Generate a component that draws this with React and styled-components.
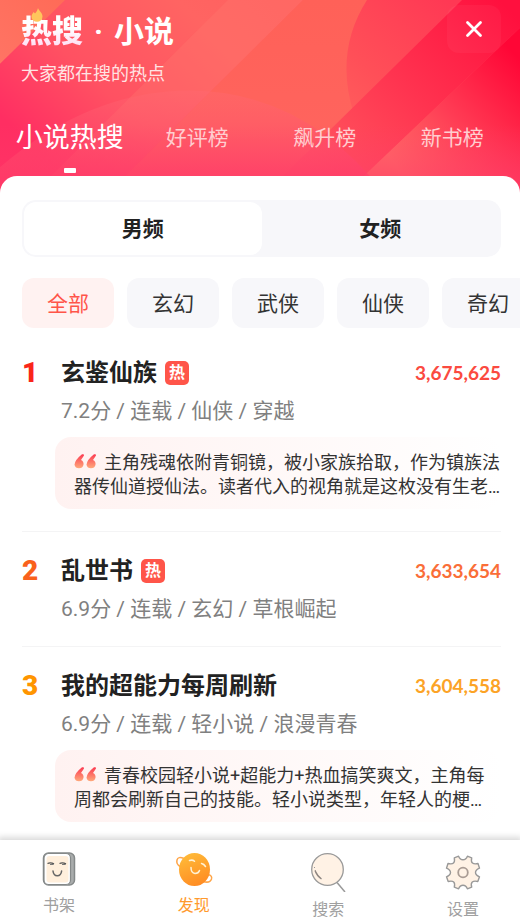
import React, { useState } from "react";
import styled, { createGlobalStyle } from "styled-components";

const GlobalStyle = createGlobalStyle`
  :root {
    --root-font: Roboto, "Noto Sans CJK SC", sans-serif;
    --number-font: Lato, "Noto Sans CJK SC", sans-serif;
  }
  * {
    box-sizing: border-box;
  }
  body {
    margin: 0;
    background: #ffffff;
    font-family: var(--root-font);
    color: #222222;
  }
  button {
    border: none;
    margin: 0;
    padding: 0;
    background: transparent;
    font-family: inherit;
    color: inherit;
    cursor: pointer;
  }
`;

const Page = styled.div`
  min-height: 100vh;
  display: flex;
  flex-direction: column;
`;

const Header = styled.header`
  position: relative;
  overflow: hidden;
  padding-bottom: 18px;
  background: #ff4d60;
  color: #ffffff;
`;

const Backdrop = styled.svg`
  position: absolute;
  inset: 0;
  width: 100%;
  height: 100%;
`;

const HeaderTop = styled.div`
  position: relative;
  display: flex;
  justify-content: space-between;
  align-items: flex-start;
  padding: 5px 19px 0 21px;
`;

const Title = styled.h1`
  display: flex;
  align-items: center;
  margin: 5px 0 0;
  font: 700 30px/44px var(--root-font);
`;

const TitleLogo = styled.span`
  position: relative;
  font-size: 31px;
  font-weight: 900;
  background: linear-gradient(#ffffff 40%, #ffdcf4 85%);
  background-clip: text;
  color: transparent;
`;

const Flame = styled.svg`
  position: absolute;
  left: 10px;
  top: -2px;
  width: 12px;
  height: 14px;
`;

const TitleDot = styled.span`
  width: 31px;
  text-align: center;
`;

const SubTitle = styled.p`
  margin: 8px 0 0;
  font: 400 18px/24px var(--root-font);
  color: #ffe3e3;
`;

const CloseButton = styled.button`
  display: flex;
  align-items: center;
  justify-content: center;
  width: 54px;
  height: 48px;
  border-radius: 12px;
  background: rgba(255, 255, 255, 0.04);
`;

const Tabs = styled.nav`
  position: relative;
  display: grid;
  grid-template-columns: repeat(4, 1fr);
  margin-top: 32px;
  padding: 0 4px 0 6px;
`;

const Tab = styled.button`
  display: flex;
  flex-direction: column;
  align-items: center;
  height: 57px;
  font-size: ${(props) => (props.$active ? "27px" : "21px")};
  line-height: 40px;
  white-space: nowrap;
  color: ${(props) => (props.$active ? "#ffffff" : "#ffcdd0")};

  &::after {
    content: "";
    width: 12px;
    height: 5px;
    margin-top: 10px;
    border-radius: 1px;
    background: ${(props) => (props.$active ? "#ffffff" : "transparent")};
  }
`;

const Sheet = styled.main`
  position: relative;
  flex: 1;
  margin-top: -17px;
  padding: 24px 0 18px;
  border-radius: 17px 17px 0 0;
  background: #ffffff;
`;

const Switch = styled.div`
  display: grid;
  grid-template-columns: 1fr 1fr;
  margin: 0 19px 0 22px;
  padding: 2px;
  border-radius: 14px;
  background: #f7f7fa;
`;

const SwitchItem = styled.button`
  height: 53px;
  padding-bottom: 4px;
  border-radius: 12px;
  background: ${(props) => (props.$active ? "#ffffff" : "transparent")};
  font-size: 21px;
  font-weight: 700;
`;

const Chips = styled.div`
  display: flex;
  gap: 13px;
  margin-top: 21px;
  padding-left: 22px;
  overflow: hidden;
`;

const Chip = styled.button`
  flex: none;
  height: 50px;
  padding: 0 25px 3px;
  border-radius: 12px;
  background: ${(props) => (props.$active ? "#fff2f1" : "#f7f7fa")};
  font-size: 21px;
  color: ${(props) => (props.$active ? "#ff5549" : "#333333")};
`;

const List = styled.ol`
  list-style: none;
  margin: 6px 19px 0 22px;
  padding: 0;
`;

const Item = styled.li`
  display: flex;
  padding: 24px 0 22px;

  & + & {
    border-top: 1px solid #f4f4f5;
  }
  &:last-child {
    padding-bottom: 0;
  }
`;

const Rank = styled.span`
  flex: none;
  width: 39px;
  font: 900 28px/30px var(--root-font);
  color: ${(props) => props.$color};
`;

const ItemBody = styled.div`
  flex: 1;
  min-width: 0;
`;

const ItemHead = styled.div`
  display: flex;
  align-items: center;
  height: 30px;
`;

const BookName = styled.h2`
  margin: 0;
  font: 700 24px/30px var(--root-font);
`;

const HotBadge = styled.span`
  width: 24px;
  height: 24px;
  margin-left: 8px;
  border-radius: 5px;
  background: #ff5549;
  font: 700 16px/23px var(--root-font);
  text-align: center;
  color: #ffffff;
`;

const Heat = styled.span`
  margin-left: auto;
  font: 700 19px/30px var(--number-font);
  color: ${(props) => props.$color};
`;

const Meta = styled.div`
  margin-top: 8px;
  font: 400 21px/30px var(--root-font);
  color: #808080;
`;

const Quote = styled.p`
  margin: 11px 0 0 -6px;
  padding: 14px 0 10px 19px;
  border-radius: 16px;
  background: linear-gradient(90deg, #fff2f1, #ffffff);
  font: 400 18px/24px var(--root-font);
  color: #333333;
`;

const QuoteMark = styled.svg`
  width: 23px;
  height: 16px;
  margin-right: 7px;
  vertical-align: -1px;
`;

const BottomBar = styled.nav`
  position: sticky;
  bottom: 0;
  display: flex;
  justify-content: space-between;
  height: 80px;
  padding: 12px 33px 0 35px;
  background: #ffffff;
  box-shadow: 0 -1px 6px 2px rgba(0, 0, 0, 0.15);
`;

const BarLink = styled.a`
  display: flex;
  flex-direction: column;
  align-items: center;
  width: 48px;
  font-size: 16px;
  line-height: 20px;
  text-decoration: none;
  color: ${(props) => (props.$active ? "#ff9a2e" : "#a0a0a0")};

  svg {
    flex: none;
    width: 40px;
    height: 40px;
    margin-bottom: ${(props) => (props.$low ? "8px" : "4px")};
  }
`;

const tabs = ["小说热搜", "好评榜", "飙升榜", "新书榜"];
const channels = ["男频", "女频"];
const genres = ["全部", "玄幻", "武侠", "仙侠", "奇幻"];

const books = [
  {
    name: "玄鉴仙族",
    hot: true,
    heat: "3,675,625",
    meta: "7.2分 / 连载 / 仙侠 / 穿越",
    quote:
      "主角残魂依附青铜镜，被小家族拾取，作为镇族法器传仙道授仙法。读者代入的视角就是这枚没有生老…",
    rankColor: "#fa2519",
    heatColor: "#fb4a40",
  },
  {
    name: "乱世书",
    hot: true,
    heat: "3,633,654",
    meta: "6.9分 / 连载 / 玄幻 / 草根崛起",
    rankColor: "#f9611c",
    heatColor: "#fa6e38",
  },
  {
    name: "我的超能力每周刷新",
    heat: "3,604,558",
    meta: "6.9分 / 连载 / 轻小说 / 浪漫青春",
    quote:
      "青春校园轻小说+超能力+热血搞笑爽文，主角每周都会刷新自己的技能。轻小说类型，年轻人的梗…",
    rankColor: "#ff9500",
    heatColor: "#fca326",
  },
];

function HeaderBackdrop() {
  return (
    <Backdrop viewBox="0 0 520 194" preserveAspectRatio="none" aria-hidden="true">
      <defs>
        <linearGradient id="base" x1="0" y1="0.6" x2="1" y2="0.2">
          <stop offset="0" stopColor="#ff2e62" />
          <stop offset="0.22" stopColor="#ff5162" />
          <stop offset="0.5" stopColor="#ff6462" />
          <stop offset="1" stopColor="#ff5a58" />
        </linearGradient>
        <linearGradient id="corner" x1="0" y1="1" x2="1" y2="0">
          <stop offset="0" stopColor="#ff7464" />
          <stop offset="1" stopColor="#ff6b57" />
        </linearGradient>
        <linearGradient id="middle" x1="0" y1="0" x2="0" y2="1">
          <stop offset="0" stopColor="#ff6158" />
          <stop offset="1" stopColor="#ff6560" />
        </linearGradient>
        <linearGradient id="disc" gradientUnits="userSpaceOnUse" x1="330" y1="130" x2="450" y2="0">
          <stop offset="0" stopColor="#ff625e" />
          <stop offset="0.4" stopColor="#ff4f58" />
          <stop offset="1" stopColor="#ff3854" />
        </linearGradient>
        <linearGradient id="band" gradientUnits="userSpaceOnUse" x1="310" y1="180" x2="500" y2="0">
          <stop offset="0" stopColor="#ff5c60" />
          <stop offset="0.5" stopColor="#ff3450" />
          <stop offset="1" stopColor="#ff103e" />
        </linearGradient>
        <linearGradient id="edge" gradientUnits="userSpaceOnUse" x1="400" y1="170" x2="520" y2="60">
          <stop offset="0" stopColor="#ff6e66" />
          <stop offset="0.45" stopColor="#ff3d55" />
          <stop offset="1" stopColor="#ff0636" />
        </linearGradient>
        <linearGradient id="arc" x1="0" y1="0" x2="0" y2="1">
          <stop offset="0" stopColor="#ff6a74" stopOpacity="0.35" />
          <stop offset="0.5" stopColor="#ff4c6c" stopOpacity="0.5" />
          <stop offset="1" stopColor="#ff3768" stopOpacity="0.8" />
        </linearGradient>
        <linearGradient id="fade" x1="0" y1="0" x2="0" y2="1">
          <stop offset="0" stopColor="#ff3768" stopOpacity="0" />
          <stop offset="1" stopColor="#ff3768" stopOpacity="0.7" />
        </linearGradient>
      </defs>
      <rect width="520" height="194" fill="url(#base)" />
      <path d="M0 0H65L0 64Z" fill="url(#corner)" />
      <path d="M228 0H303L108 194H34Z" fill="#ff7a70" fillOpacity="0.3" />
      <path d="M303 0H400V194H108Z" fill="url(#middle)" />
      <path d="M367 0Q334 52 354 115L330 194H520V0Z" fill="url(#disc)" />
      <path d="M462 0H520V28L346 194H266Z" fill="url(#band)" />
      <path d="M520 28L346 194H520Z" fill="url(#edge)" />
      <rect y="125" width="520" height="69" fill="url(#fade)" />
      <path d="M0 168Q90 91 190 91Q305 92 384 194H0Z" fill="url(#arc)" />
    </Backdrop>
  );
}

function QuoteIcon() {
  return (
    <QuoteMark viewBox="0 0 23 16" aria-hidden="true">
      <defs>
        <linearGradient id="quote" x1="0" y1="0" x2="0" y2="1">
          <stop offset="0" stopColor="#fb3a51" />
          <stop offset="1" stopColor="#ffaa7c" />
        </linearGradient>
      </defs>
      <path
        fill="url(#quote)"
        d="M8 0.300Q10.500 0 10 1.500L7 6Q10 7.500 9.500 10.800A4.600 4.500 0 0 1 0.500 10.800Q0.800 6 8 0.300ZM20 0.300Q22.500 0 22 1.500L19 6Q22 7.500 21.500 10.800A4.600 4.500 0 0 1 12.500 10.800Q12.800 6 20 0.300Z"
      />
    </QuoteMark>
  );
}

function ShelfIcon() {
  return (
    <svg viewBox="0 0 40 40" fill="none" aria-hidden="true">
      <rect x="4.500" y="1" width="31" height="32" rx="5" fill="#a9acac" stroke="#858989" strokeWidth="1.500" />
      <rect x="5" y="1.500" width="26.500" height="31" rx="4.500" fill="#fff" stroke="#858989" strokeWidth="1.200" />
      <rect x="7.500" y="4" width="22" height="26.500" rx="3" fill="#ffefdc" />
      <path d="M8.500 11.500q3-1.500 6.500.3M20.500 11.500q3-1.500 6.500.3" stroke="#555" strokeWidth="1.300" />
      <path d="M11 12.500h3.500M23 12.500h3.500" stroke="#777" strokeWidth="1.200" />
      <path d="M14 19q.5 4.800 4.300 4.800t4.300-4.800" stroke="#666" strokeWidth="1.500" strokeLinecap="round" />
    </svg>
  );
}

function PlanetIcon() {
  return (
    <svg viewBox="0 0 40 40" fill="none" aria-hidden="true">
      <defs>
        <linearGradient id="planet" x1="0.3" y1="0" x2="0.7" y2="1">
          <stop offset="0" stopColor="#ffba38" />
          <stop offset="1" stopColor="#ff8a22" />
        </linearGradient>
      </defs>
      <path d="M10 6.500Q4 4 3 8Q2 12 6 14.500M34 22.500Q38.500 23.500 37.500 27Q36 31.500 29 29.500" stroke="#ffa548" strokeWidth="1.500" />
      <ellipse cx="20.500" cy="17.500" rx="15.500" ry="16.500" fill="url(#planet)" />
      <path d="M15.500 8.500q3-1 5 .7M27.500 11.500q2.500.5 4 3" stroke="#fff2d5" strokeWidth="1.500" strokeLinecap="round" />
      <path d="M17 15.500q0 5.500 4 6q3.500 0 4.500-3" stroke="#fff2d5" strokeWidth="1.500" strokeLinecap="round" />
    </svg>
  );
}

function SearchIcon() {
  return (
    <svg viewBox="0 0 40 40" fill="none" aria-hidden="true">
      <circle cx="19.500" cy="17.500" r="15.800" fill="#fff2e5" stroke="#999" strokeWidth="1.300" />
      <path d="M29 30.500L37 40" stroke="#999" strokeWidth="1.500" />
      <path d="M7 18.500q1.500 5 6.500 8.500q-4-3-6.500-8.500" stroke="#8d8580" strokeWidth="1.200" />
      <path d="M6.500 15v1" stroke="#999" />
    </svg>
  );
}

function GearIcon() {
  return (
    <svg viewBox="0 0 40 40" fill="none" aria-hidden="true">
      <path
        fill="#fff2e5"
        stroke="#999"
        strokeWidth="1.400"
        strokeLinejoin="round"
        d="M11.300 5.800L15.600 4.200Q17 7.800 20 7.800T24.400 4.200L28.700 5.800Q27.800 9.600 29.500 11T35 11.500L36.500 16.200Q32.500 18 32.500 20.500T36.500 24.800L34.800 29.500Q31 28.600 29.300 30T28.700 35.200L24.400 36.800Q23 33.200 20 33.200T15.600 36.800L11.300 35.200Q12.200 31.400 10.700 30T5.200 29.500L3.500 24.800Q7.500 23 7.500 20.500T3.500 16.200L5 11.500Q9 12.400 10.500 11T11.300 5.800Z"
      />
      <circle cx="20" cy="20.500" r="4.800" stroke="#aa9c94" strokeWidth="1.800" />
    </svg>
  );
}

const barLinks = [
  { label: "书架", href: "#shelf", icon: <ShelfIcon /> },
  { label: "发现", href: "#discover", icon: <PlanetIcon />, active: true },
  { label: "搜索", href: "#search", icon: <SearchIcon />, low: true },
  { label: "设置", href: "#settings", icon: <GearIcon />, low: true },
];

function App() {
  const [tab, setTab] = useState(0);
  const [channel, setChannel] = useState(0);
  const [genre, setGenre] = useState(0);

  return (
    <Page>
      <GlobalStyle />
      <Header>
        <HeaderBackdrop />
        <HeaderTop>
          <div>
            <Title>
              <TitleLogo>
                热搜
                <Flame viewBox="0 0 12 14" aria-hidden="true">
                  <path
                    d="M7 0C7.500 2.500 11.500 4.500 11.500 8.500A5.500 5.300 0 0 1 0.500 8.500C0.500 6.500 2 5.500 2.500 4Q3.500 4.500 4 5.500C5.500 4 6.500 2 7 0Z"
                    fill="#ffc65c"
                  />
                </Flame>
              </TitleLogo>
              <TitleDot>·</TitleDot>
              小说
            </Title>
            <SubTitle>大家都在搜的热点</SubTitle>
          </div>
          <CloseButton aria-label="关闭">
            <svg width="18" height="18" viewBox="0 0 18 18" aria-hidden="true">
              <path d="M2.500 2.500L15.500 15.500M15.500 2.500L2.500 15.500" stroke="#fff" strokeWidth="2.800" strokeLinecap="round" />
            </svg>
          </CloseButton>
        </HeaderTop>
        <Tabs>
          {tabs.map((name, index) => (
            <Tab key={name} $active={tab === index} onClick={() => setTab(index)}>
              {name}
            </Tab>
          ))}
        </Tabs>
      </Header>
      <Sheet>
        <Switch>
          {channels.map((name, index) => (
            <SwitchItem key={name} $active={channel === index} onClick={() => setChannel(index)}>
              {name}
            </SwitchItem>
          ))}
        </Switch>
        <Chips>
          {genres.map((name, index) => (
            <Chip key={name} $active={genre === index} onClick={() => setGenre(index)}>
              {name}
            </Chip>
          ))}
        </Chips>
        <List>
          {books.map((book, index) => (
            <Item key={book.name}>
              <Rank $color={book.rankColor}>{index + 1}</Rank>
              <ItemBody>
                <ItemHead>
                  <BookName>{book.name}</BookName>
                  {book.hot && <HotBadge>热</HotBadge>}
                  <Heat $color={book.heatColor}>{book.heat}</Heat>
                </ItemHead>
                <Meta>{book.meta}</Meta>
                {book.quote && (
                  <Quote>
                    <QuoteIcon />
                    {book.quote}
                  </Quote>
                )}
              </ItemBody>
            </Item>
          ))}
        </List>
      </Sheet>
      <BottomBar>
        {barLinks.map((link) => (
          <BarLink key={link.label} href={link.href} $active={link.active} $low={link.low}>
            {link.icon}
            {link.label}
          </BarLink>
        ))}
      </BottomBar>
    </Page>
  );
}

export default App;
